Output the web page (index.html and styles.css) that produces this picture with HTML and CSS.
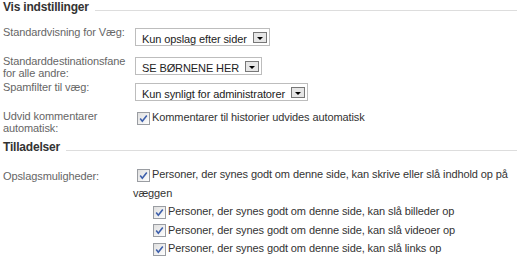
FILE: index.html
```html
<!DOCTYPE html>
<html lang="da">
<head>
    <meta charset="UTF-8">
    <meta name="viewport" content="width=device-width, initial-scale=1.0">
    <title>Indstillinger</title>
    <link rel="stylesheet" href="styles.css">
</head>
<body>
    <div class="page">
        <div class="section-title">Vis indstillinger</div>

        <div class="settings">
            <div class="label">Standardvisning for Væg:</div>
            <div class="field">
                <span class="select"><span class="select-text">Kun opslag efter sider</span><span class="arrow"></span></span>
            </div>

            <div class="label">Standarddestinationsfane for alle andre:</div>
            <div class="field">
                <span class="select"><span class="select-text">SE BØRNENE HER</span><span class="arrow"></span></span>
            </div>

            <div class="label">Spamfilter til væg:</div>
            <div class="field">
                <span class="select"><span class="select-text">Kun synligt for administratorer</span><span class="arrow"></span></span>
            </div>

            <div class="label">Udvid kommentarer automatisk:</div>
            <div class="field field-check">
                <span class="check"><svg width="13" height="13" viewBox="0 0 13 13"><rect x="0.5" y="0.5" width="12" height="12" fill="url(#boks)" stroke="#9a9da2"/><path d="M3.2 6.6 L5.3 9.2 L9.8 3.4" fill="none" stroke="#3d5fab" stroke-width="1.6"/></svg></span>Kommentarer til historier udvides automatisk
            </div>
        </div>

        <div class="section-title">Tilladelser</div>

        <div class="perms">
            <div class="label">Opslagsmuligheder:</div>
            <div class="field field-list">
                <div class="item">
                    <span class="check"><svg width="13" height="13" viewBox="0 0 13 13"><rect x="0.5" y="0.5" width="12" height="12" fill="url(#boks)" stroke="#9a9da2"/><path d="M3.2 6.6 L5.3 9.2 L9.8 3.4" fill="none" stroke="#3d5fab" stroke-width="1.6"/></svg></span>Personer, der synes godt om denne side, kan skrive eller slå indhold op på væggen
                </div>
                <div class="item sub">
                    <span class="check"><svg width="13" height="13" viewBox="0 0 13 13"><rect x="0.5" y="0.5" width="12" height="12" fill="url(#boks)" stroke="#9a9da2"/><path d="M3.2 6.6 L5.3 9.2 L9.8 3.4" fill="none" stroke="#3d5fab" stroke-width="1.6"/></svg></span>Personer, der synes godt om denne side, kan slå billeder op
                </div>
                <div class="item sub">
                    <span class="check"><svg width="13" height="13" viewBox="0 0 13 13"><rect x="0.5" y="0.5" width="12" height="12" fill="url(#boks)" stroke="#9a9da2"/><path d="M3.2 6.6 L5.3 9.2 L9.8 3.4" fill="none" stroke="#3d5fab" stroke-width="1.6"/></svg></span>Personer, der synes godt om denne side, kan slå videoer op
                </div>
                <div class="item sub">
                    <span class="check"><svg width="13" height="13" viewBox="0 0 13 13"><rect x="0.5" y="0.5" width="12" height="12" fill="url(#boks)" stroke="#9a9da2"/><path d="M3.2 6.6 L5.3 9.2 L9.8 3.4" fill="none" stroke="#3d5fab" stroke-width="1.6"/></svg></span>Personer, der synes godt om denne side, kan slå links op
                </div>
            </div>
        </div>
    </div>

    <!-- faelles gradient til checkboksene -->
    <svg width="0" height="0" class="defs">
        <defs>
            <linearGradient id="boks" x1="0" y1="0" x2="1" y2="1">
                <stop offset="0" stop-color="#dedede"/>
                <stop offset="1" stop-color="#ffffff"/>
            </linearGradient>
        </defs>
    </svg>
</body>
</html>
```

FILE: styles.css
```css
body {
    margin: 0;
    background-color: #ffffff;
    font-family: "Liberation Sans", Arial, sans-serif;
    font-size: 11px;
    letter-spacing: -0.1px;
    color: #333333;
}

.page {
    padding: 0 1px 0 3px;
}

.defs {
    position: absolute;
}

/* overskrift med streg */
.section-title {
    display: flex;
    align-items: flex-start;
    gap: 6px;
    height: 15px;
    font-size: 12px;
    font-weight: bold;
    line-height: 15px;
    letter-spacing: -0.2px;
    color: #333333;
}

.section-title::after {
    content: "";
    flex: 1;
    margin-top: 10px;
    border-top: 1px solid #dddddd;
}

.settings {
    display: grid;
    grid-template-columns: 130px 1fr;
    grid-template-rows: 29px 26px 29px 30px;
    margin-top: 11px;
}

.label {
    color: #666666;
    line-height: 12px;
}

.field {
    line-height: 12px;
}

/* dropdown */
.select {
    display: inline-flex;
    align-items: flex-start;
    box-sizing: border-box;
    height: 18px;
    margin: 2px 0 0 2px;
    padding: 0 2px 0 6px;
    border: 1px solid #bdbdbd;
    background-color: #ffffff;
    color: #222222;
}

.select-text {
    padding-top: 4px;
    white-space: nowrap;
}

.arrow {
    display: flex;
    align-items: center;
    justify-content: center;
    box-sizing: border-box;
    width: 14px;
    height: 11px;
    margin: 3px 0 0 6px;
    border: 1px solid #777777;
    background-color: #e6e6e6;
}

.arrow::after {
    content: "";
    margin-top: 2px;
    border-left: 3px solid transparent;
    border-right: 3px solid transparent;
    border-top: 3px solid #000000;
}

/* checkbokse */
.check {
    display: inline-block;
    width: 13px;
    height: 13px;
    margin: 0 2px 0 4px;
    vertical-align: -3.5px;
}

.check svg {
    display: block;
}

.field-check {
    padding-top: 1px;
}

.perms {
    display: grid;
    grid-template-columns: 130px 1fr;
    margin-top: 10px;
}

.perms .label {
    padding-top: 5px;
}

.field-list {
    line-height: 18.5px;
}

.item.sub {
    padding-left: 16px;
}
```
